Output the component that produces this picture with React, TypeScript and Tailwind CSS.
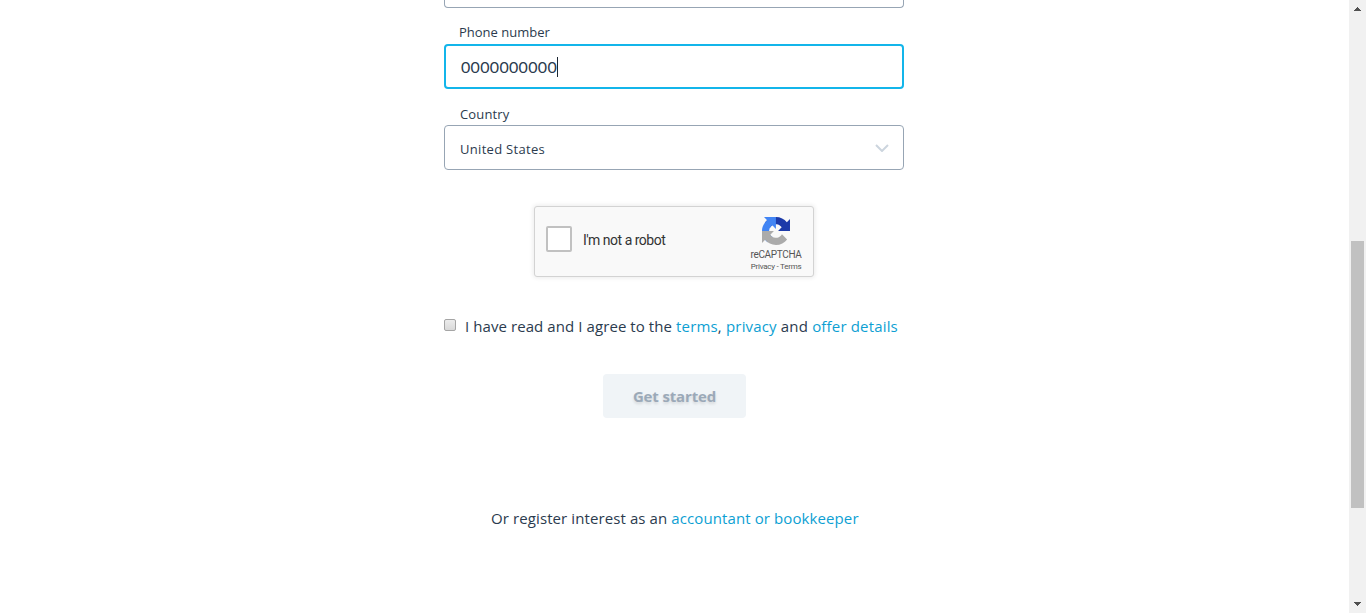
import React from 'react';

function RecaptchaLogo() {
  return (
    <svg width="28" height="28" viewBox="0 0 64 64">
      <path fill="#1C3AA9" d="M64 31.955l-.033-1.37V4.687l-7.16 7.16C50.948 4.674 42.033.093 32.05.093c-10.4 0-19.622 4.96-25.458 12.64l11.736 11.86a15.55 15.55 0 0 1 4.754-5.334c2.05-1.6 4.952-2.906 8.968-2.906.485 0 .86.057 1.135.163 4.976.393 9.288 3.14 11.828 7.124l-8.307 8.307L64 31.953" />
      <path fill="#4285F4" d="M31.862.094l-1.37.033H4.594l7.16 7.16C4.58 13.147 0 22.06 0 32.046c0 10.4 4.96 19.622 12.64 25.458L24.5 45.768a15.55 15.55 0 0 1-5.334-4.754c-1.6-2.05-2.906-4.952-2.906-8.968 0-.485.057-.86.163-1.135.393-4.976 3.14-9.288 7.124-11.828l8.307 8.307L31.86.095" />
      <path fill="#ABABAB" d="M.001 32.045l.033 1.37v25.898l7.16-7.16c5.86 7.173 14.774 11.754 24.76 11.754 10.4 0 19.622-4.96 25.458-12.64l-11.736-11.86a15.55 15.55 0 0 1-4.754 5.334c-2.05 1.6-4.952 2.906-8.968 2.906-.485 0-.86-.057-1.135-.163-4.976-.393-9.288-3.14-11.828-7.124l8.307-8.307c-10.522.04-22.4.066-27.295-.005" />
    </svg>
  );
}

function Recaptcha() {
  return (
    <div className="ml-[90px] mt-9 flex h-[71px] w-[280px] justify-between rounded-[3px] border border-[#d3d3d3] bg-[#f9f9f9] font-[Roboto,sans-serif] shadow-[0_0_4px_1px_rgba(0,0,0,0.08)]">
      <div className="flex items-start pl-[11px] pt-[19px]">
        <div className="h-[26px] w-[26px] rounded-[2px] border-2 border-[#c1c1c1] bg-white" />
        <span className="ml-[11px] mt-[6px] whitespace-nowrap text-[14px] leading-[17px] tracking-[-0.5px] text-[#333]">I'm not a robot</span>
      </div>
      <div className="mr-[11px] flex w-[52px] flex-col items-center whitespace-nowrap pt-[10px] text-[#555]">
        <RecaptchaLogo />
        <div className="mt-[4px] text-[10px] leading-[12px] tracking-[-0.35px]">reCAPTCHA</div>
        <div className="text-[8px] leading-[12px] tracking-[-0.25px]">Privacy - Terms</div>
      </div>
    </div>
  );
}

function Scrollbar() {
  return (
    <div className="flex w-[17px] flex-col items-center bg-[#f1f1f1]">
      <svg width="17" height="17" shapeRendering="crispEdges">
        <path d="M8 7h1v1h1v1h1v1h1v1H5v-1h1V9h1V8h1z" fill="#505050" />
      </svg>
      <div className="mt-[224px] h-[267px] w-[13px] bg-[#c1c1c1]" />
      <svg className="mt-auto" width="17" height="17" shapeRendering="crispEdges">
        <path d="M5 6h7v1h-1v1h-1v1H9v1H8V9H7V8H6V7H5z" fill="#505050" />
      </svg>
    </div>
  );
}

export default function App() {
  return (
    <div className="flex h-[613px] w-[1366px] overflow-hidden bg-white font-['Open_Sans',sans-serif] text-[#2b3b4e]">
      <main className="flex-1 pl-[444px]">
        <div className="h-2 w-[460px] rounded-b-[4px] border border-t-0 border-[#97a5b4]" />
        <div className="mt-[15px] pl-[15px] text-[13px] leading-[18px]">Phone number</div>
        <div className="mt-[3px] flex h-[45px] w-[460px] items-center rounded-[4px] border-2 border-[#13b5ea] pl-[15px]">
          <span className="mt-px font-[Lato,sans-serif] text-[16px] leading-5 tracking-[0.32px]">0000000000</span>
          <span className="h-5 w-px bg-[#1c2733]" />
        </div>
        <div className="mt-4 pl-4 text-[13px] leading-[18px] tracking-[0.15px]">Country</div>
        <div className="mt-[2px] flex h-[45px] w-[460px] items-center justify-between rounded-[4px] border border-[#97a5b4] pl-[15px] pr-[14px]">
          <span className="mt-[3px] text-[13px] leading-[18px] tracking-[0.3px]">United States</span>
          <svg width="14" height="8" viewBox="0 0 14 8" fill="none" stroke="#ccd5de" strokeWidth="2">
            <path d="M1 1l6 6 6-6" />
          </svg>
        </div>
        <Recaptcha />
        <div className="mt-[39px] flex h-[22px] whitespace-nowrap">
          <span className="mt-[3px] h-3 w-3 rounded-[2px] border border-[#a5a5a5] bg-linear-to-b from-[#ececec] to-[#d9d9d9]" />
          <span className="-mt-px ml-[9px] text-[15px] leading-[22px] tracking-[0.08px]">
            I have read and I agree to the <span className="tracking-[0.17px]"><a className="text-[#0d9fd3]">terms</a>, <a className="text-[#0d9fd3]">privacy</a> and <a className="text-[#0d9fd3]">offer details</a></span>
          </span>
        </div>
        <button className="ml-[159px] mt-[36px] flex h-11 w-[143px] items-center justify-center rounded-[4px] bg-[#f0f4f7] text-[15px] font-bold tracking-[-0.15px] text-[#9ba9b8] [text-shadow:0_2px_3px_rgba(0,0,0,0.12)]">Get started</button>
        <div className="ml-[47px] mt-[89px] whitespace-nowrap text-[15px] leading-[22px] tracking-[0.1px]">
          Or register interest as an <a className="text-[#0d9fd3]">accountant or bookkeeper</a>
        </div>
      </main>
      <Scrollbar />
    </div>
  );
}
